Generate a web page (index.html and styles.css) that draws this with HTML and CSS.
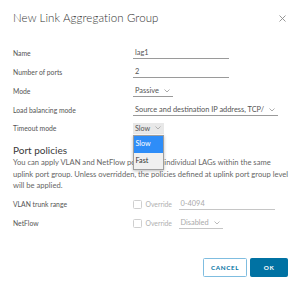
FILE: index.html
```html
<!DOCTYPE html>
<html>
<head>
<meta charset="utf-8">
<link rel="stylesheet" href="styles.css">
</head>
<body>
<div class="dialog">
  <div class="header">
    <div class="title">New Link Aggregation Group</div>
    <div class="close"><svg width="7" height="7" viewBox="0 0 7 7"><path d="M0.5 0.5L6.5 6.5M6.5 0.5L0.5 6.5" stroke="#8c8c8c" stroke-width="0.9"/></svg></div>
  </div>
  <div class="row"><div class="label">Name</div><div class="input w96">lag1</div></div>
  <div class="row"><div class="label">Number of ports</div><div class="input w96">2</div></div>
  <div class="row"><div class="label">Mode</div><div class="select w40"><span>Passive</span><svg class="chev" width="6" height="4" viewBox="0 0 6 4"><path d="M0.5 0.5L3 3L5.5 0.5" fill="none" stroke="#888" stroke-width="0.7"/></svg></div></div>
  <div class="row"><div class="label">Load balancing mode</div><div class="select w145"><span>Source and destination IP address, TCP/</span><svg class="chev" width="6" height="4" viewBox="0 0 6 4"><path d="M0.5 0.5L3 3L5.5 0.5" fill="none" stroke="#888" stroke-width="0.7"/></svg></div></div>
  <div class="row short"><div class="label">Timeout mode</div>
    <div class="open-select"><span>Slow</span><svg class="chev" width="6" height="4" viewBox="0 0 6 4"><path d="M0.5 0.5L3 3L5.5 0.5" fill="none" stroke="#999" stroke-width="0.7"/></svg>
      <div class="menu"><div class="opt sel">Slow</div><div class="opt">Fast</div></div>
    </div>
  </div>
  <div class="section">Port policies</div>
  <p class="desc">You can apply VLAN and NetFlow policies on individual LAGs within the same uplink port group. Unless overridden, the policies defined at uplink port group level will be applied.</p>
  <div class="row"><div class="label">VLAN trunk range</div><div class="override"><span class="cb"></span><span class="ov">Override</span><div class="input dis w96">0-4094</div></div></div>
  <div class="row"><div class="label">NetFlow</div><div class="override"><span class="cb"></span><span class="ov">Override</span><div class="select dis w44"><span>Disabled</span><svg class="chev" width="6" height="4" viewBox="0 0 6 4"><path d="M0.5 0.5L3 3L5.5 0.5" fill="none" stroke="#aaa" stroke-width="0.8"/></svg></div></div></div>
  <div class="footer">
    <button class="btn outline">CANCEL</button>
    <button class="btn primary">OK</button>
  </div>
</div>
</body>
</html>
```
FILE: styles.css
```css
html, body { margin: 0; padding: 0; background: #fff; }
body { font-family: "Lato", "Open Sans", sans-serif; color: #454545; }
.dialog { width: 300px; height: 282px; padding: 0 12px 0 13px; box-sizing: border-box; }
.header { height: 43.5px; display: flex; align-items: flex-start; justify-content: space-between; }
.title { margin-top: 10px; font-size: 11.5px; font-weight: 300; color: #333; line-height: 16px; letter-spacing: 0.1px; }
.close { margin-top: 15px; margin-right: 2px; width: 7px; height: 7px; }
.close svg { display: block; }
.row { display: flex; align-items: center; height: 19px; font-size: 6.8px; }
.row.short { height: 17px; }
.label { width: 120px; flex: none; color: #555; }
.input { height: 10px; line-height: 10px; border-bottom: 1px solid #9a9a9a; padding-left: 2px; color: #555; font-size: 7.4px; box-sizing: content-box; }
.w96 { width: 94px; }
.w40 { width: 38px; }
.w145 { width: 143px; }
.w44 { width: 42px; }
.select { height: 10px; line-height: 10px; border-bottom: 1px solid #9a9a9a; padding-left: 2px; display: flex; align-items: center; justify-content: space-between; color: #555; font-size: 7.4px; }
.chev { display: block; margin-right: 3px; }
.open-select { position: relative; width: 31px; height: 11px; background: #e8e8e8; display: flex; align-items: center; justify-content: space-between; padding-left: 2px; box-sizing: border-box; color: #555; font-size: 7.2px; }
.menu { position: absolute; left: 0; top: 12.5px; width: 31px; background: #f0f0f0; border: 1px solid #9e9e9e; box-shadow: 0 1px 3px rgba(0,0,0,0.25); box-sizing: border-box; z-index: 2; }
.opt { height: 16.5px; line-height: 16.5px; padding-left: 1.5px; color: #333; font-size: 7.2px; }
.opt.sel { background: #2e8df8; color: #fff; }
.section { margin-top: 6.5px; font-size: 10px; line-height: 14px; color: #3a3a3a; }
.desc { margin: 0; width: 275px; font-size: 7.6px; line-height: 11.5px; color: #666; }
.desc + .row { margin-top: 3px; }
.override { display: flex; align-items: center; }
.cb { width: 7px; height: 7px; border: 1px solid #cfcfcf; border-radius: 1.5px; display: block; }
.ov { margin-left: 3.5px; width: 33px; color: #b0b0b0; }
.dis { color: #aaa; border-bottom-color: #c6c6c6; }
.footer { display: flex; justify-content: flex-end; gap: 3px; margin-top: 25.5px; }
.btn { height: 19px; font-family: "Lato", sans-serif; font-size: 6.3px; font-weight: 700; letter-spacing: 0.6px; border-radius: 1.5px; padding: 0; cursor: pointer; }
.btn.outline { width: 44px; background: #fff; color: #0072a3; border: 1px solid #7fbde0; }
.btn.primary { width: 38px; background: #0072a3; color: #fff; border: 1px solid #0072a3; }
```
